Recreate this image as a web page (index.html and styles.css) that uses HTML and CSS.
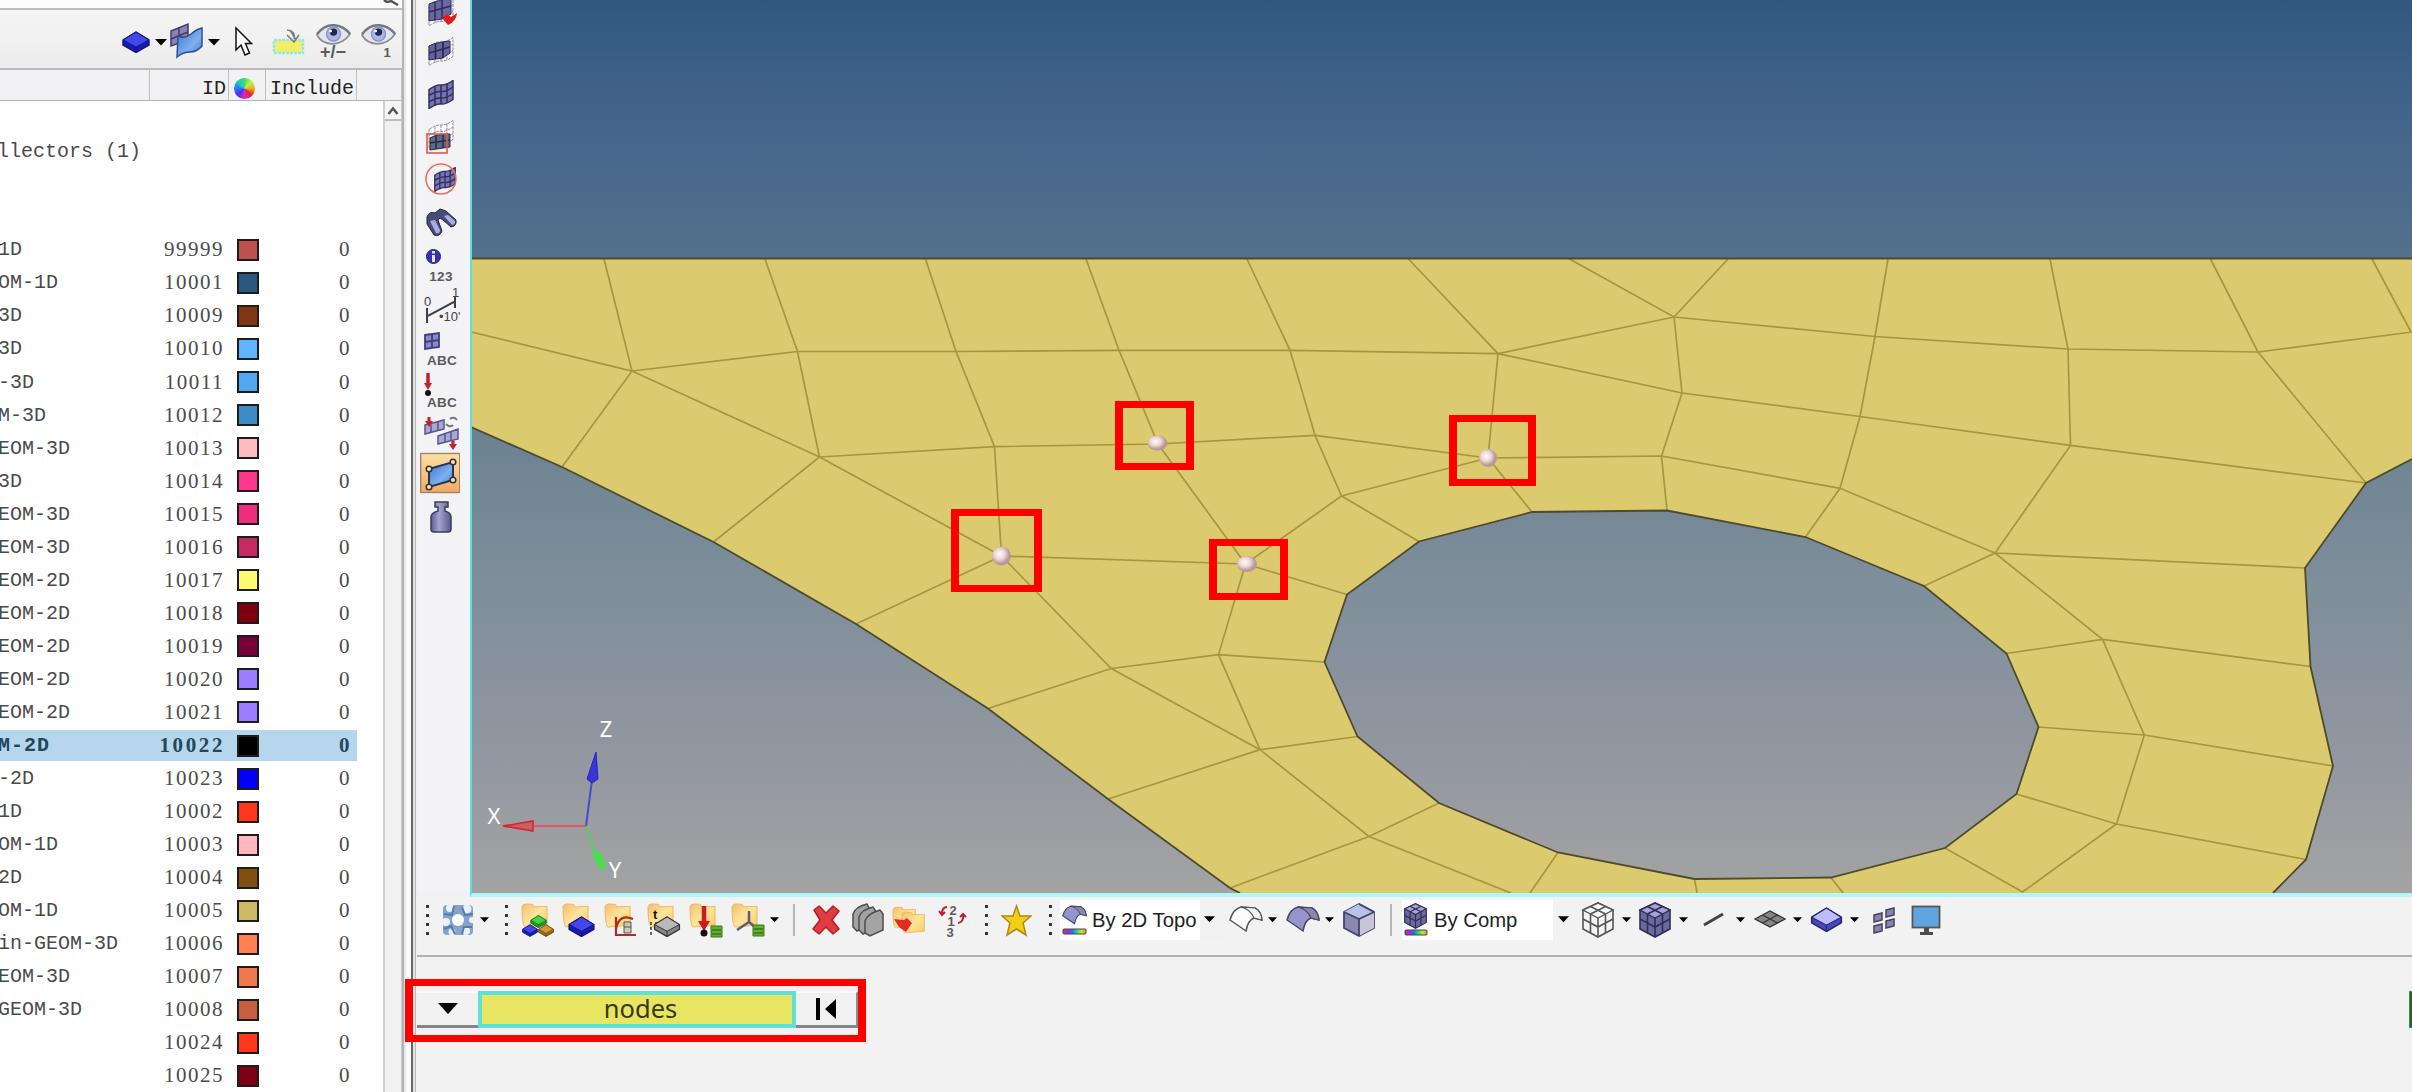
FILE: index.html
```html
<!DOCTYPE html>
<html lang="en">
<head>
<meta charset="utf-8">
<title>Mesh editor</title>
<link rel="stylesheet" href="styles.css">
</head>
<body>
<svg class="defs" width="0" height="0">
  <defs>
    <linearGradient id="gFolder" x1="0" y1="0" x2="1" y2="1"><stop offset="0" stop-color="#f6bd6c"/><stop offset=".5" stop-color="#fde49a"/><stop offset="1" stop-color="#f8cf62"/></linearGradient>
    <linearGradient id="gPurple" x1="0" y1="0" x2="1" y2="1"><stop offset="0" stop-color="#6f6ba8"/><stop offset="1" stop-color="#a9a7dc"/></linearGradient>
    <linearGradient id="gBlue" x1="0" y1="0" x2="1" y2="1"><stop offset="0" stop-color="#3a73cf"/><stop offset=".6" stop-color="#7fb0ee"/><stop offset="1" stop-color="#3f78d0"/></linearGradient>
    <linearGradient id="gOrange" x1="0" y1="0" x2="0" y2="1"><stop offset="0" stop-color="#fbe0a6"/><stop offset="1" stop-color="#f3a964"/></linearGradient>
    <linearGradient id="gRainbow"><stop offset="0" stop-color="#e0305c"/><stop offset=".2" stop-color="#9b2be0"/><stop offset=".4" stop-color="#2d6be8"/><stop offset=".6" stop-color="#2fd07a"/><stop offset=".8" stop-color="#c8e03a"/><stop offset="1" stop-color="#f08a30"/></linearGradient>
    <linearGradient id="gBottle"><stop offset="0" stop-color="#5d5b8e"/><stop offset=".4" stop-color="#a5a3cf"/><stop offset="1" stop-color="#5a5888"/></linearGradient>
    <radialGradient id="gNode" cx=".4" cy=".4"><stop offset="0" stop-color="#fffafa"/><stop offset=".55" stop-color="#eed6d8"/><stop offset="1" stop-color="#b8989a"/></radialGradient>
    <symbol id="mesh" viewBox="0 0 28 28"><path d="M2 9Q9 4 14 4.500T26 0V19Q19 24 14 23.500T2 28Z" fill="#7774b4" stroke="#35335f" stroke-width="1.500"/><path d="M8 6V25.500M14 4.500V23.500M20 3V22M2 15Q9 10.500 14 11T26 6.500M2 21.500Q9 17 14 17.500T26 13" fill="none" stroke="#2f2d5a" stroke-width="1.500"/></symbol>
    <symbol id="ghost" viewBox="0 0 28 28"><path d="M2 9Q9 4 14 4.500T26 0V19Q19 24 14 23.500T2 28ZM8 6V25.500M14 4.500V23.500M20 3V22M2 15Q9 10.500 14 11T26 6.500M2 21.500Q9 17 14 17.500T26 13" fill="#fff" fill-opacity=".7" stroke="#8b8b96" stroke-width="1" stroke-dasharray="3 1"/></symbol>
    <symbol id="folder" viewBox="0 0 30 26"><path d="M1 4Q2 1 5 1L12 1.500L13 4L27 3.500V23L4 25Q1 22 1 4Z" fill="url(#gFolder)" stroke="#dfb05c" stroke-width=".8"/></symbol>
    <symbol id="block" viewBox="0 0 28 22"><path d="M1 9L14 1L27 9V14L14 21.500L1 14Z" fill="var(--side)" stroke="var(--line)" stroke-width="1.400"/><path d="M1 9L14 1L27 9L14 16Z" fill="var(--top)" stroke="var(--line)" stroke-width="1"/><path d="M14 16V21" stroke="var(--line)"/></symbol>
    <symbol id="caret" viewBox="0 0 12 8"><path d="M0 1H12L6 7.500Z" fill="#000"/></symbol>
    <symbol id="grip" viewBox="0 0 6 34"><path d="M1 2h3v3h-3zM1 11h3v3h-3zM1 20h3v3h-3zM1 29h3v3h-3z" fill="#333"/></symbol>
    <symbol id="surf" viewBox="0 0 34 26"><path d="M1 14Q4 3 12 1L26 2Q32 5 33 14L25 12Q19 14 17 25Q10 20 1 14Z" fill="var(--top)" stroke="var(--line)" stroke-width="1.500"/><path d="M12 1Q21 3 25 12L33 14Q32 5 26 2Z" fill="var(--side)" stroke="var(--line)" stroke-width="1.200"/></symbol>
    <symbol id="cube3" viewBox="0 0 34 36"><path d="M17 1L32 8V27L17 35L2 27V8Z" fill="var(--side)" stroke="var(--line)" stroke-width="1.600"/><path d="M17 1L32 8L17 16L2 8Z" fill="var(--top)" stroke="var(--line)" stroke-width="1.400"/><path d="M17 16V35M2 17L17 25L32 17M9.500 12V31M24.500 12V31M9.500 4.500L24.500 12M24.500 4.500L9.500 12" fill="none" stroke="var(--line)" stroke-width="1.600"/></symbol>
    <symbol id="eye" viewBox="0 0 36 24"><path d="M1 12Q8 2 18 2T35 11Q28 21 17 21T1 12Z" fill="#e6e6ea" stroke="#8d8d94" stroke-width="1.800"/><path d="M1 11Q9 1 19 2T35 11" fill="none" stroke="#77777f" stroke-width="2.400"/><circle cx="18" cy="11" r="8" fill="#8796cf"/><circle cx="18" cy="11" r="6.500" fill="#a9b6e6"/><circle cx="18" cy="9" r="3.800" fill="#24264e"/><circle cx="15" cy="8" r="1.500" fill="#fff"/></symbol>
  </defs>
</svg>

<div class="app">
  <aside class="browser">
    <div class="search"><svg width="18" height="6"><path d="M1 0Q4 3 8 1L15 5" fill="none" stroke="#555" stroke-width="2.500"/></svg></div>
    <div class="tools">
      <svg class="royal" width="30" height="40"><use href="#block" x="2" y="9" width="28" height="22"/></svg>
      <svg width="14" height="8"><use href="#caret" x="1" width="12" height="8"/></svg>
      <svg width="38" height="40" viewBox="0 0 38 40"><path d="M3 9L20 2V18L3 24Z" fill="#8d80b6" stroke="#433a6b" stroke-width="1.500"/><path d="M11 5V21M3 17L20 10" stroke="#433a6b" stroke-width="1.500"/><path d="M10 14Q17 17 23 12T34 6V24Q29 30 22 30T9 35Z" fill="url(#gBlue)" stroke="#2a508f" stroke-width="1.500"/></svg>
      <svg width="14" height="8"><use href="#caret" x="1" width="12" height="8"/></svg>
      <svg width="24" height="40" viewBox="0 0 24 40"><path d="M4 6V28L9 23L13 33L17.500 31L13.500 21.500H19.500Z" fill="#fff" stroke="#111" stroke-width="1.500"/></svg>
      <svg width="36" height="40" viewBox="0 0 36 40"><rect x="4" y="18" width="29" height="13" fill="#f3ee6a" stroke="#8fe9e6" stroke-width="2.500" stroke-dasharray="3 1"/><path d="M17 8Q26 9 24 17M17 13L24 20L29 13M20 8L26 18" fill="none" stroke="#7d8080" stroke-width="1.600"/></svg>
      <svg width="38" height="40" viewBox="0 0 38 40"><use href="#eye" x="1" y="1" width="35" height="24"/><text x="18" y="36" class="glyph big" text-anchor="middle">+/−</text></svg>
      <svg width="38" height="40" viewBox="0 0 38 40"><use href="#eye" x="1" y="1" width="35" height="24"/><text x="27" y="35" class="glyph mid" text-anchor="middle">1</text></svg>
    </div>
    <div class="head"><span></span><span class="r">ID</span><span><i class="wheel"></i></span><span>Include</span><span></span></div>
    <div class="body">
      <div class="list">
        <div class="group">llectors (1)</div>
        <div class="row"><span>1D</span><b>99999</b><i style="background:#be514e"></i><em>0</em></div>
        <div class="row"><span>OM-1D</span><b>10001</b><i style="background:#2b587f"></i><em>0</em></div>
        <div class="row"><span>3D</span><b>10009</b><i style="background:#803514"></i><em>0</em></div>
        <div class="row"><span>3D</span><b>10010</b><i style="background:#60b4ff"></i><em>0</em></div>
        <div class="row"><span>-3D</span><b>10011</b><i style="background:#52a8f0"></i><em>0</em></div>
        <div class="row"><span>M-3D</span><b>10012</b><i style="background:#3d8cc8"></i><em>0</em></div>
        <div class="row"><span>EOM-3D</span><b>10013</b><i style="background:#ffbcbe"></i><em>0</em></div>
        <div class="row"><span>3D</span><b>10014</b><i style="background:#ff368d"></i><em>0</em></div>
        <div class="row"><span>EOM-3D</span><b>10015</b><i style="background:#f02c7c"></i><em>0</em></div>
        <div class="row"><span>EOM-3D</span><b>10016</b><i style="background:#c52b60"></i><em>0</em></div>
        <div class="row"><span>EOM-2D</span><b>10017</b><i style="background:#fffb70"></i><em>0</em></div>
        <div class="row"><span>EOM-2D</span><b>10018</b><i style="background:#7d0010"></i><em>0</em></div>
        <div class="row"><span>EOM-2D</span><b>10019</b><i style="background:#780038"></i><em>0</em></div>
        <div class="row"><span>EOM-2D</span><b>10020</b><i style="background:#9b7dff"></i><em>0</em></div>
        <div class="row"><span>EOM-2D</span><b>10021</b><i style="background:#9b7dff"></i><em>0</em></div>
        <div class="row sel"><span>M-2D</span><b>10022</b><i style="background:#000"></i><em>0</em></div>
        <div class="row"><span>-2D</span><b>10023</b><i style="background:#0000ff"></i><em>0</em></div>
        <div class="row"><span>1D</span><b>10002</b><i style="background:#ff351c"></i><em>0</em></div>
        <div class="row"><span>OM-1D</span><b>10003</b><i style="background:#ffb6be"></i><em>0</em></div>
        <div class="row"><span>2D</span><b>10004</b><i style="background:#805012"></i><em>0</em></div>
        <div class="row"><span>OM-1D</span><b>10005</b><i style="background:#cdb964"></i><em>0</em></div>
        <div class="row"><span>in-GEOM-3D</span><b>10006</b><i style="background:#ff7f50"></i><em>0</em></div>
        <div class="row"><span>EOM-3D</span><b>10007</b><i style="background:#f07850"></i><em>0</em></div>
        <div class="row"><span>GEOM-3D</span><b>10008</b><i style="background:#c85f3e"></i><em>0</em></div>
        <div class="row"><span></span><b>10024</b><i style="background:#ff371b"></i><em>0</em></div>
        <div class="row"><span></span><b>10025</b><i style="background:#7d0014"></i><em>0</em></div>
      </div>
      <div class="scroll"><div class="up"><svg width="12" height="9"><path d="M1.500 8L6 2.500L10.500 8" fill="none" stroke="#555" stroke-width="2.500"/></svg></div></div>
    </div>
  </aside>
  <div class="splitter"></div>

  <main class="main">
    <div class="upper">
      <nav class="vbar">
        <svg viewBox="0 0 40 42.200"><use href="#ghost" x="7" y="10" width="28" height="28"/><path d="M9 16Q17 12 31 10V26L22 31L9 33Z" fill="#6a68a0" stroke="#2f2d55"/><path d="M15 14V32M22 12V31M9 24L31 18" stroke="#2f2d55" stroke-width="1.500"/><path d="M22 30L27 26L31 29L37 25Q36 34 28 37Z" fill="#e01c1c"/></svg>
        <svg viewBox="0 0 40 42.200"><use href="#ghost" x="7" y="6" width="28" height="31"/><path d="M9 16Q17 12 30 11V23L23 28L9 30Z" fill="#6664a0" stroke="#2b2950"/><path d="M15.500 13V29M23 12V28M9 23L30 17" stroke="#2b2950" stroke-width="1.700"/></svg>
        <svg viewBox="0 0 40 42.200"><use href="#mesh" x="7" y="8" width="28" height="29"/></svg>
        <svg viewBox="0 0 40 42.200"><use href="#ghost" x="7" y="6" width="28" height="29"/><path d="M10 24Q17 20 30 20V33L10 36Z" fill="#5b6a88" stroke="#252c44"/><path d="M16 21V35M23 20V34M10 29L30 26" stroke="#252c44" stroke-width="1.500"/><rect x="7" y="20" width="20" height="19" fill="none" stroke="#e0564a" stroke-width="1.600"/></svg>
        <svg viewBox="0 0 40 42.200"><use href="#mesh" x="13" y="11" width="24" height="25"/><circle cx="21" cy="23" r="15" fill="none" stroke="#e5705c" stroke-width="1.500"/></svg>
        <svg viewBox="0 0 40 42.200"><path d="M7 18Q9 12 15 14L20 10L26 12L36 21Q37 27 31 28L23 21L20 19L18 21L22 32Q20 38 14 36L7 25Z" fill="#4a4c78" stroke="#20213f"/><path d="M10 22L16 34Q20 35 20 31L15 21ZM24 17L32 26Q36 25 35 22L28 16Z" fill="#a9addc"/></svg>
        <svg viewBox="0 0 40 42.200"><circle cx="13.500" cy="15.500" r="7" fill="#3a2fb4" stroke="#272080"/><path d="M12 10h3v2.500h-3zM12 14h3v7h-3z" fill="#e5e3ff"/><text x="21" y="40" class="glyph abc" text-anchor="middle">123</text></svg>
        <svg viewBox="0 0 40 42.200"><path d="M7 25V40M35 14V25M8 33L34 19" fill="none" stroke="#3c3c4c" stroke-width="2"/><text x="4" y="23" class="thin">0</text><text x="32" y="14" class="thin">1</text><text x="19" y="38" class="thin">•10'</text></svg>
        <svg viewBox="0 0 40 42.200"><path d="M5 10L19 8V22L5 24ZM12 9V23M5 17L19 15" fill="#8d8bc6" stroke="#403d80" stroke-width="1.800"/><text x="22" y="40" class="glyph abc" text-anchor="middle">ABC</text></svg>
        <svg viewBox="0 0 40 42.200"><path d="M8 6V20" stroke="#c42029" stroke-width="3.500"/><path d="M4 16H12L8 23Z" fill="#c42029"/><circle cx="8" cy="26" r="3" fill="#111"/><text x="22" y="40" class="glyph abc" text-anchor="middle">ABC</text></svg>
        <svg viewBox="0 0 40 42.200"><path d="M5 15L24 10V19L5 24ZM11 14V22M18 12V21M18 26L38 19V29L18 34ZM25 24V32M31 22V30" fill="#a9a7d3" stroke="#58568c" stroke-width="1.500"/><path d="M9 7V12M33 31V36" stroke="#c42029" stroke-width="3"/><path d="M5 11H13L9 17ZM29 34H37L33 40Z" fill="#c42029"/><path d="M26 14Q30 18 33 15M30 9Q34 6 37 10" fill="none" stroke="#777" stroke-width="2"/></svg>
        <svg viewBox="0 0 40 42.200"><rect x=".7" y="1.500" width="39" height="39" fill="url(#gOrange)" stroke="#9c8768" stroke-width="1.400"/><path d="M9 17L33 10V28L9 35Z" fill="url(#gBlue)" stroke="#26364f" stroke-width="2"/><g fill="#f5dfb8" stroke="#333" stroke-width="1.500"><circle cx="9" cy="17" r="2.800"/><circle cx="33" cy="10" r="2.800"/><circle cx="33" cy="28" r="2.800"/><circle cx="9" cy="35" r="2.800"/></g></svg>
        <svg viewBox="0 0 40 42.200"><path d="M15 8H28V13H25V17Q31 19 31 23V35Q31 38 28 38H14Q11 38 11 35V23Q11 19 18 17V13H15Z" fill="url(#gBottle)" stroke="#3e3c5e" stroke-width="1.500"/></svg>
      </nav>
      <div class="viewport">
        <svg width="1940" height="893" viewBox="472 0 1940 893">
          <path fill="#dcca6e" fill-rule="evenodd" d="M471 259H2412V459L2366 483L2305 568L2310.500 666.500L2333 766L2306 859.500L2273 893H1240L1230 888L1108 799L988 708.500L856 624L713.500 542L562 467L471 427ZM1532 512L1667 510.500L1805.500 537L1924 586L2006.500 653.500L2038.500 727L2016.500 794L1945 848L1831 877.500L1694.500 879L1558 852.500L1439 803L1357.500 736.500L1324.500 662L1347 594.500L1419 541.500Z"/>
          <g fill="none" stroke="#a8953f" stroke-width="1.700">
            <path d="M604 259L632 371L471 332M632 371L797.500 351.500L956 351.500L1119 350.300L1290 350.300L1498 353.600L1674 317L1875 336.500L2068 349L2258 352L2412 332M562 467L632 371L819.500 457L1001.500 556"/>
            <path d="M765 259L797.500 351.500L819.500 457L713.500 542M925.500 259L956 351.500L994.500 446.600L1001.500 556L856 624M1086 259L1119 350.300L1158 444L1245.500 564L1218.500 654.600L1260 749.700M1247 259L1290 350.300L1315 435.300L1341.500 496L1419 541.500M1408.500 259L1498 353.600L1488 458L1532 512"/>
            <path d="M1569.500 259L1674 317L1728 259M1674 317L1682 393L1661.500 456L1667 510.500M1498 353.600L1682 393L1860 416.500L2070.500 445.400L2366 483M1888 259L1875 336.500L1860 416.500L1840 488.300L1805.500 537M2050 259L2068 349L2070.500 445.400L1995 553L1924 586M2210.500 259L2258 352L2366 483M2372 259L2411 332"/>
            <path d="M819.500 457L994.500 446.600L1158 444L1315 435.300L1488 458L1341.500 496L1245.500 564L1347 594.500M1488 458L1661.500 456L1840 488.300L1995 553L2102.500 639.400L2144.300 735L2116.500 824L2022.500 892L1945 848M1995 553L2305 568M2006.500 653.500L2102.500 639.400L2310.500 666.500M2038.500 727L2144.300 735L2333 766M2016.500 794L2116.500 824L2306 859.500"/>
            <path d="M1001.500 556L1245.500 564M1001.500 556L1111.300 668.500L1260 749.700L1369 836.500L1511 893M988 708.500L1111.300 668.500L1218.500 654.600L1324.500 662M1108 799L1260 749.700L1357.500 736.500M1230 888L1369 836.500L1439 803M1558 852.500L1530 893M1694.500 879L1697 893M1831 877.500L1843 893"/>
          </g>
          <g fill="none" stroke="#4e4a2c" stroke-width="1.800">
            <path d="M471 258.500H2412M471 427L562 467L713.500 542L856 624L988 708.500L1108 799L1230 888L1240 893M2412 459L2366 483L2305 568L2310.500 666.500L2333 766L2306 859.500L2273 893"/>
            <path d="M1532 512L1667 510.500L1805.500 537L1924 586L2006.500 653.500L2038.500 727L2016.500 794L1945 848L1831 877.500L1694.500 879L1558 852.500L1439 803L1357.500 736.500L1324.500 662L1347 594.500L1419 541.500Z"/>
          </g>
          <g fill="url(#gNode)"><ellipse cx="1157.500" cy="443" rx="10" ry="7.500"/><circle cx="1001.500" cy="556" r="9.500"/><ellipse cx="1247" cy="564" rx="10" ry="8"/><circle cx="1488" cy="458" r="9"/></g>
          <path d="M586 826L592 780" stroke="#4a4acb" stroke-width="2"/><path d="M596 752L587 779L592 783L598 779Z" fill="#3a35d6" stroke="#2722c8"/>
          <path d="M586 826H532" stroke="#e85560" stroke-width="2"/><path d="M503 826L533 821V831Z" fill="#c5605f" stroke="#d9232c" stroke-width="1.500"/>
          <path d="M586 827L594 850" stroke="#58cf5c" stroke-width="2"/><path d="M592 849L601 853L606 864L604 872L598 866L593 857Z" fill="#4ade4e"/>
          <text x="606" y="737" class="axis" text-anchor="middle">Z</text><text x="494" y="824" class="axis" text-anchor="middle">X</text><text x="615" y="878" class="axis" text-anchor="middle">Y</text>
        </svg>
      </div>
    </div>

    <div class="hbar">
      <svg width="6" height="34"><use href="#grip" width="6" height="34"/></svg>
      <svg width="32" height="34" viewBox="0 0 32 34"><rect x="1" y="2" width="30" height="30" rx="4" fill="#86a3cb"/><circle cx="16" cy="17" r="6" fill="#fff"/><g fill="#e9f1fa"><circle cx="8" cy="5" r="4"/><circle cx="25" cy="6" r="4.500"/><circle cx="4" cy="19" r="4"/><circle cx="10" cy="29" r="3.500"/><circle cx="24" cy="28" r="4"/><circle cx="30" cy="17" r="3"/></g><path d="M2 11L10 12L12 3M20 4L23 12L31 11M2 26L9 23L13 31M20 31L22 24L30 24" fill="none" stroke="#5679ae" stroke-width="2"/></svg>
      <svg width="11" height="8"><use href="#caret" x="1" width="9" height="7"/></svg>
      <svg width="6" height="34"><use href="#grip" width="6" height="34"/></svg>
      <svg width="34" height="36"><use href="#folder" width="29" height="27"/><g class="green"><use href="#block" x="9" y="13" width="17" height="13"/></g><g class="royal"><use href="#block" x="1" y="22" width="16" height="13"/></g><g class="brown"><use href="#block" x="17" y="22" width="16" height="13"/></g></svg>
      <svg width="34" height="36"><use href="#folder" width="29" height="27"/><g class="royal"><use href="#block" x="6" y="14" width="27" height="21"/></g></svg>
      <svg width="34" height="36"><use href="#folder" width="29" height="27"/><path d="M12 15V33H32M12 27Q15 11 29 17" fill="none" stroke="#b02a2a" stroke-width="2.200"/><path d="M20 20V31H27V20ZM20 25H27" fill="#cfc8b8" stroke="#555"/></svg>
      <svg width="34" height="36"><use href="#folder" width="29" height="27"/><text x="6" y="17" class="glyph mid dark">t</text><path d="M4 20V34M9 20V29" stroke="#333" stroke-width="1.500" stroke-dasharray="3 2"/><g class="grey"><use href="#block" x="6" y="14" width="28" height="21"/></g></svg>
      <svg width="34" height="36"><use href="#folder" width="29" height="27"/><path d="M15 4V22" stroke="#cf1920" stroke-width="4.500"/><path d="M9 19H21L15 29Z" fill="#cf1920"/><circle cx="15" cy="31" r="3.500" fill="#111"/><path d="M22 24h11v11h-11z" fill="#63b030" stroke="#3c7418"/><path d="M23 28h9M23 32h9" stroke="#3c7418" stroke-width="1.500"/></svg>
      <svg width="34" height="36"><use href="#folder" width="29" height="27"/><path d="M18 9V20L6 28M18 20L24 25" fill="none" stroke="#5a5e78" stroke-width="2.500"/><path d="M22 23h11v11h-11z" fill="#63b030" stroke="#3c7418"/><path d="M23 27h9M23 31h9" stroke="#3c7418" stroke-width="1.500"/></svg>
      <svg width="11" height="8"><use href="#caret" x="1" width="9" height="7"/></svg>
      <svg width="2" height="32"><path d="M1 0V32" stroke="#a2a2a2" stroke-width="1.500"/></svg>
      <svg width="30" height="34" viewBox="0 0 30 34"><path d="M3 7L8 3L15 10L22 3L28 8L21 17L28 26L22 31L15 24L8 31L2 26L9 17Z" fill="#e03c41" stroke="#b01f26" stroke-width="1.500" stroke-linejoin="round"/></svg>
      <svg width="34" height="36" viewBox="0 0 34 36"><g fill="#a3a3a3" stroke="#4e4e4e" stroke-width="1.500"><path d="M2 25V12Q4 5 16 2L19 8V23L6 29Z"/><path d="M8 28V15Q10 8 22 5L26 11V25L12 32Z"/><path d="M14 31V19Q16 12 29 8L32 12V28L19 34Z"/></g></svg>
      <svg width="36" height="36"><use href="#folder" y="2" width="26" height="27"/><use href="#folder" x="9" y="7" width="26" height="27"/><path d="M2 17L12 18L15 16L20 21L14 30L7 25Z" fill="#e02c22"/></svg>
      <svg width="30" height="36" viewBox="0 0 30 36"><text x="15" y="13" class="glyph mid" text-anchor="middle">2</text><text x="13" y="24" class="glyph mid" text-anchor="middle">1</text><text x="12" y="35" class="glyph mid" text-anchor="middle">3</text><path d="M9 5Q4 5 4 12M1 9L4 13L7 10M20 21Q26 20 25 13M22 15L25 12L28 15" fill="none" stroke="#b8232b" stroke-width="2"/></svg>
      <svg width="6" height="34"><use href="#grip" width="6" height="34"/></svg>
      <svg width="31" height="34" viewBox="0 0 31 34"><path d="M15.500 3L19 13H30L22 20L25 32L15.500 26L6 32L9 20L1 13H12Z" fill="#f2cf10" stroke="#a98a18" stroke-width="1.500"/></svg>
      <svg width="6" height="34"><use href="#grip" width="6" height="34"/></svg>
      <div class="combo topo"><svg class="violet" width="25" height="36"><use href="#surf" y="3" width="25" height="20"/><rect x="1" y="27" width="23" height="5" rx="1" fill="url(#gRainbow)" stroke="#444"/></svg><span>By 2D Topo</span><svg class="drop" width="12" height="8"><use href="#caret" x="1" width="11" height="8"/></svg></div>
      <svg class="plain" width="34" height="28"><use href="#surf" width="34" height="26"/></svg>
      <svg width="11" height="8"><use href="#caret" x="1" width="9" height="7"/></svg>
      <svg class="violet" width="34" height="28"><use href="#surf" width="34" height="26"/></svg>
      <svg width="11" height="8"><use href="#caret" x="1" width="9" height="7"/></svg>
      <svg width="34" height="36" viewBox="0 0 34 36"><path d="M17 2L32 10V26L17 34L2 26V10Z" fill="#8a87b4" stroke="#45426a" stroke-width="1.800"/><path d="M17 2L32 10L17 17L2 10Z" fill="#b9c0ee"/><path d="M17 17L32 10V26L17 34Z" fill="#c5c4d8"/><path d="M2 10L17 17L32 10M17 17V34M17 2L32 10" fill="none" stroke="#45426a" stroke-width="1.800"/></svg>
      <svg width="2" height="32"><path d="M1 0V32" stroke="#a2a2a2" stroke-width="1.500"/></svg>
      <div class="combo comp"><svg class="slate" width="26" height="36"><use href="#cube3" y="1" width="25" height="26"/><rect x="2" y="28" width="22" height="5" rx="1" fill="url(#gRainbow)" stroke="#444"/></svg><span>By Comp</span></div>
      <svg class="drop" width="12" height="8"><use href="#caret" x="1" width="11" height="8"/></svg>
      <svg class="plain" width="34" height="36"><use href="#cube3" width="34" height="36"/></svg>
      <svg width="11" height="8"><use href="#caret" x="1" width="9" height="7"/></svg>
      <svg class="slate" width="34" height="36"><use href="#cube3" width="34" height="36"/></svg>
      <svg width="11" height="8"><use href="#caret" x="1" width="9" height="7"/></svg>
      <svg width="24" height="20"><path d="M2 15L21 4" stroke="#444" stroke-width="3"/></svg>
      <svg width="11" height="8"><use href="#caret" x="1" width="9" height="7"/></svg>
      <svg width="32" height="20"><path d="M1 9L16 1L31 9L16 17ZM8.500 5L23.500 13M23.500 5L8.500 13" fill="#858585" stroke="#333" stroke-width="1.400"/></svg>
      <svg width="11" height="8"><use href="#caret" x="1" width="9" height="7"/></svg>
      <svg class="indigo" width="33" height="26"><use href="#block" width="33" height="25" preserveAspectRatio="none"/></svg>
      <svg width="11" height="8"><use href="#caret" x="1" width="9" height="7"/></svg>
      <svg width="25" height="34" viewBox="0 0 25 34"><path d="M2 12L10 10V17L2 19ZM14 7L22 5V12L14 14ZM2 23L10 21V28L2 30ZM14 18L22 16V23L14 25Z" fill="#8784b4" stroke="#45425f" stroke-width="1.500"/></svg>
      <svg width="31" height="34" viewBox="0 0 31 34"><rect x="1.500" y="3.500" width="27" height="21" fill="#5fa4de" stroke="#555" stroke-width="1.800"/><path d="M13 25h5v4h4v3H9v-3h4z" fill="#4d4d4d"/></svg>
    </div>

    <div class="panel">
      <div class="picker">
        <div class="btn"><svg width="22" height="14"><path d="M1 1H21L11 12Z"/></svg></div>
        <div class="entity">nodes</div>
        <div class="btn"><svg width="22" height="24"><path d="M1 1H5V23H1ZM21 2V22L10 12Z"/></svg></div>
      </div>
      <div class="edge-btn"></div>
    </div>
  </main>

  <div class="mark m1"></div><div class="mark m2"></div><div class="mark m3"></div><div class="mark m4"></div><div class="mark m5"></div>
</div>
</body>
</html>
```

FILE: styles.css
```css
* { box-sizing: border-box; }
body { margin: 0; background: #f1f1f1; overflow: hidden; }
svg { display: block; }
.defs { position: absolute; }

.app {
  position: relative;
  display: grid;
  grid-template-columns: 402px 15px 1fr;
  width: 2412px;
  height: 1092px;
  overflow: hidden;
}

/* palettes for the shared shapes */
.royal { --top: #4548e8; --side: #1a1bb4; --line: #11127e; }
.green { --top: #43d546; --side: #209a24; --line: #136416; }
.brown { --top: #d09a33; --side: #9a6a1b; --line: #61400e; }
.grey { --top: #b9b9b9; --side: #858585; --line: #333; }
.violet { --top: #9793cd; --side: #8a87aa; --line: #48455f; }
.plain { --top: #fbfbfb; --side: #f4f4f4; --line: #555; }
.slate { --top: #a4a5d4; --side: #6b6a9c; --line: #302e55; }
.indigo { --top: #bcbcff; --side: #4a47ba; --line: #28266f; }

/* model browser */
.browser {
  display: flex;
  flex-direction: column;
  height: 1092px;
  overflow: hidden;
  font: 20px "Liberation Mono", monospace;
  color: #4a4a4a;
}
.search { display: flex; justify-content: flex-end; height: 10px; padding-right: 1px; background: #fcfcfc; border-bottom: 2px solid #bdbdbd; }
.tools {
  display: grid;
  grid-template-columns: 34px 14px 39px 25px 38px 45px 45px 38px;
  align-items: center;
  height: 60px;
  padding: 5px 0 0 120px;
  background: linear-gradient(#f5f5f5, #ececec);
  border-bottom: 2px solid #b9b9b9;
}
.head {
  display: grid;
  grid-template-columns: 150px 79px 37px 91px 45px;
  height: 31px;
  line-height: 37px;
  background: #f2f1f3;
  border-bottom: 1px solid #b4b4b4;
  color: #222;
}
.head span { border-right: 1px solid #bfbfbf; padding-left: 4px; }
.head .r { text-align: right; padding-right: 2px; }
.wheel {
  display: block;
  width: 21px;
  height: 21px;
  margin: 8px 0 0 1px;
  border-radius: 50%;
  background: conic-gradient(#38e060, #c8f040, #e8b030, #e02828, #e028c0, #5a28e8, #2878f0, #20c8d0, #38e060);
}
.body { display: flex; flex: 1; min-height: 0; background: #fff; }
.list { width: 383px; }
.group { height: 132.300px; padding: 39px 0 0 0; margin-left: -3px; }
.row {
  display: grid;
  grid-template-columns: 140px 86px 34px 93px;
  align-items: center;
  width: 357px;
  height: 33.050px;
  margin-left: -2px;
  line-height: 33px;
}
.row span, .row b, .row em { font-weight: 400; font-style: normal; white-space: nowrap; }
.row b, .row em { font-family: "Liberation Serif", serif; font-size: 21px; letter-spacing: 1.500px; text-align: right; }
.row i { width: 22px; height: 22px; margin-left: 12.500px; border: 2px solid #1d1d1d; }
.row.sel { width: 359px; background: linear-gradient(transparent 1px, #b5d6ec 1px, #b5d6ec 31.500px, transparent 31.500px); color: #24475c; }
.row.sel span { font-weight: 700; letter-spacing: 1px; }
.row.sel b, .row.sel em { font-weight: 700; letter-spacing: 2.600px; margin-right: -1px; }
.scroll { flex: 1; background: #f1f1f2; border-left: 2px solid #cfcfcf; border-right: 1px solid #c9c9c9; }
.up { display: grid; place-items: center; height: 20px; background: #f6f6f6; border-bottom: 2px solid #bcbcbc; }

.splitter {
  background: linear-gradient(90deg, #b4b4b4 0 2px, #e8e8e8 2px 4px, #fafafa 4px 9px, #666 9px 11px, #e2e2e2 11px 13px, #bdbdbd 13px 14px, #f0f0f0 14px);
}

/* work area */
.main { display: flex; flex-direction: column; min-width: 0; }
.upper { display: flex; height: 897px; }
.vbar { display: flex; flex-direction: column; width: 53px; height: 893px; padding-left: 3px; background: #f3f2f4; overflow: hidden; }
.vbar svg { flex: none; width: 40px; height: 42.200px; }
.vbar svg:first-child { margin-top: -12.300px; }
.viewport {
  flex: 1;
  height: 897px;
  border-left: 2px solid #5fdcdf;
  border-bottom: 4px solid #aef8fa;
  background: linear-gradient(#30587f 0, #41638a 100px, #54718d 258px, #6c8291 430px, #7e8e9b 580px, #9096a0 740px, #a3a3a3 893px);
}
.axis { font: 22px "Noto Sans", sans-serif; fill: #fff; }
.glyph { font-family: "Liberation Sans", sans-serif; font-weight: 700; fill: #5b5b5b; }
.abc { font-size: 13.500px; letter-spacing: .3px; }
.mid { font-size: 13px; }
.big { font-size: 18px; }
.dark { fill: #111; }
.thin { font: 13px "Liberation Sans", sans-serif; fill: #444; }

.hbar {
  display: grid;
  grid-template-columns: 17px 37px 25px 17px 41px 42px 43px 42px 42px 38px 24px 18px 40px 41px 46px 46px 17px 47px 12px 169px 38px 19px 38px 18px 48px 12px 155px 24px 40px 17px 40px 24px 33px 19px 38px 18px 39px 23px 39px 40px;
  align-items: center;
  height: 60px;
  padding: 0 0 12px 8px;
  background: #f3f2f3;
  border-bottom: 2px solid #b0b0b0;
}
.combo { display: flex; align-items: center; height: 40px; padding-left: 2px; background: #fff; font: 20.300px "Liberation Sans", sans-serif; color: #222; white-space: nowrap; }
.combo span { margin-left: 5px; }
.topo { width: 164px; background: linear-gradient(90deg, #fff 140px, #f1f1f1 140px); }
.comp { width: 151px; padding-left: 1px; }
.drop { margin-top: -3px; }
.topo .drop { margin-left: 7px; }

.panel { display: flex; justify-content: space-between; flex: 1; padding-top: 34px; background: #f1f1f1; }
.picker { display: flex; height: 37px; }
.btn { display: grid; place-items: center; width: 62px; background: #f1f1f1; border: solid; border-width: 2px 2px 3px 0; border-color: #fafafa #8d8d8d #858585; }
.btn:first-child { border-right: 0; width: 61px; }
.entity {
  width: 318px;
  padding-left: 7px;
  border: 4px solid #5fe0d6;
  background: #e8e563;
  font: 25.500px/27px "Noto Sans", sans-serif;
  text-align: center;
  color: #3a3815;
}
.edge-btn { width: 3px; height: 37px; background: #2d5a30; border: 1px solid #2f9a3a; border-right: 0; }

/* annotation frames */
.mark { position: absolute; border: solid #f00; border-width: 7px 8px; }
.m1 { left: 1115px; top: 401px; width: 79px; height: 69px; }
.m2 { left: 951px; top: 509px; width: 91px; height: 83px; }
.m3 { left: 1209px; top: 539px; width: 79px; height: 61px; }
.m4 { left: 1449px; top: 415px; width: 87px; height: 71px; }
.m5 { left: 405px; top: 979px; width: 461px; height: 63px; }
```
